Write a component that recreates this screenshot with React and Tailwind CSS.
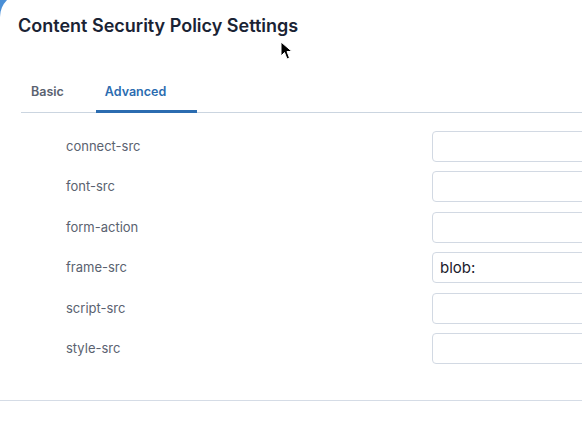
import React, { useState } from 'react';

const directives = [
  { name: 'connect-src', value: '' },
  { name: 'font-src', value: '' },
  { name: 'form-action', value: '' },
  { name: 'frame-src', value: 'blob:' },
  { name: 'script-src', value: '' },
  { name: 'style-src', value: '' },
];

const Cursor = () => (
  <svg className="absolute left-[280px] top-[41px]" width="14" height="20" viewBox="0 0 14 20">
    <path d="M1 1 L1 15 L4.5 11.5 L7 18 L9.5 17 L7 10.5 L12 10.5 Z" fill="#000" stroke="#fff" strokeWidth="1" />
  </svg>
);

const App = () => {
  const [tab, setTab] = useState('advanced');
  const [values, setValues] = useState(directives.map((d) => d.value));

  const handleChange = (i, v) => {
    const next = [...values];
    next[i] = v;
    setValues(next);
  };

  return (
    <div className="relative w-[582px] h-[422px] overflow-hidden bg-[#4a8fd6] font-['Inter',sans-serif]">
      <div className="absolute left-0 top-[-7px] w-[620px] h-[460px] bg-white rounded-tl-[24px]">
        <div className="pl-[18px] pt-[21px]">
          <h2 className="text-[18px] font-semibold text-[#1a2334] leading-[24px]">
            Content Security Policy Settings
          </h2>
        </div>

        <div className="ml-[21px] mt-[45px] flex border-b border-[#cbd5e0]">
          <button
            onClick={() => setTab('basic')}
            className={`px-[10px] pb-[8px] text-[12.5px] font-semibold border-b-[3px] -mb-px text-left ${
              tab === 'basic' ? 'text-[#2b6cb0] border-[#2b6cb0]' : 'text-[#5a6270] border-transparent'
            }`}
          >
            Basic
          </button>
          <button
            onClick={() => setTab('advanced')}
            className={`ml-[22px] pl-[9px] pb-[8px] text-[12.5px] font-semibold border-b-[3px] -mb-px w-[101px] text-left ${
              tab === 'advanced' ? 'text-[#2b6cb0] border-[#2b6cb0]' : 'text-[#5a6270] border-transparent'
            }`}
          >
            Advanced
          </button>
        </div>

        <div className="pt-[18px] flex flex-col gap-[9.5px]">
          {directives.map((d, i) => (
            <div key={d.name} className="flex items-center h-[31px]">
              <label className="w-[432px] shrink-0 pl-[66px] text-[13px] text-[#5a6270]">{d.name}</label>
              <input
                className="h-[31px] w-[200px] shrink-0 rounded-[4px] border border-[#d2d9e3] px-[7px] text-[15px] text-[#1a202c] focus:outline-none"
                value={values[i]}
                onChange={(e) => handleChange(i, e.target.value)}
              />
            </div>
          ))}
        </div>

        <div className="mt-[36px] border-t border-[#d5dce6]" />
      </div>
      <Cursor />
    </div>
  );
};

export default App;
